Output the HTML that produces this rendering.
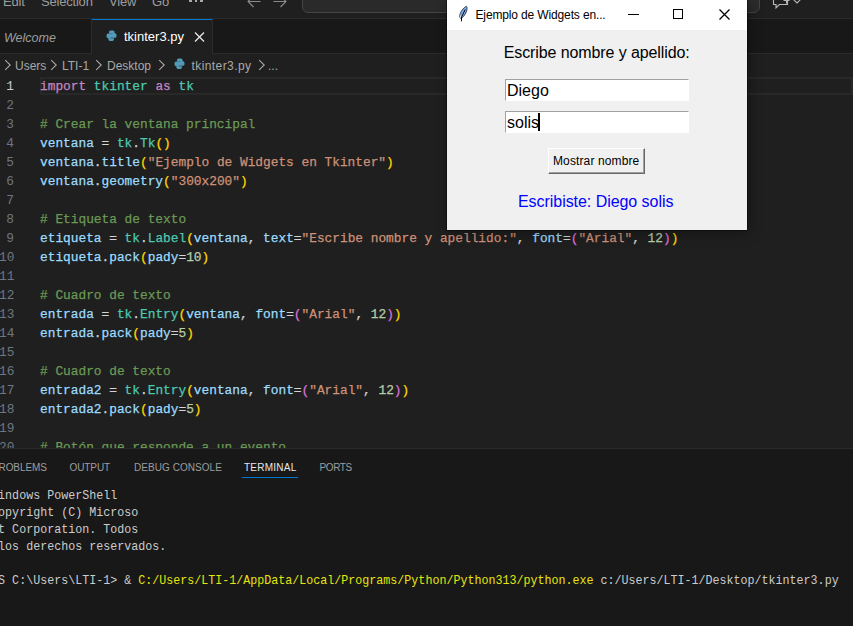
<!DOCTYPE html>
<html><head><meta charset="utf-8">
<style>
*{margin:0;padding:0;box-sizing:border-box}
html,body{width:853px;height:626px;overflow:hidden;background:#1f1f1f}
body{position:relative;font-family:"Liberation Sans",sans-serif}
.abs{position:absolute}
#titlebar{left:0;top:0;width:853px;height:19px;background:#1f1f1f;border-bottom:1px solid #2b2b2b}
.menu{position:absolute;top:-5.6px;font-size:13px;letter-spacing:-0.2px;color:#9d9d9d;white-space:nowrap;line-height:16px}
#search{left:302px;top:-10px;width:458px;height:23px;border:1px solid #454545;border-radius:6px;background:#2a2a2a}
#tabbar{left:0;top:19px;width:853px;height:35px;background:#181818;border-bottom:1px solid #2b2b2b}
#tab1{left:0;top:19px;width:92px;height:35px;background:#181818;border-right:1px solid #2b2b2b;border-bottom:1px solid #2b2b2b}
#tab2{left:92px;top:19px;width:121px;height:35px;background:#1f1f1f;border-top:1px solid #0078d4;border-right:1px solid #2b2b2b}
#editor{left:0;top:54px;width:853px;height:394px;background:#1f1f1f;overflow:hidden}
.code{position:absolute;left:40px;font-family:"Liberation Mono",monospace;font-size:12.82px;-webkit-text-stroke:0.25px currentColor;line-height:19px;white-space:pre;color:#d4d4d4}
.ln{position:absolute;width:14px;text-align:right;font-family:"Liberation Mono",monospace;font-size:12.82px;line-height:19px;color:#6e7681;white-space:pre}
.v{color:#9cdcfe}.k{color:#c586c0}.t{color:#4ec9b0}.c{color:#6a9955}.s{color:#ce9178}.n{color:#b5cea8}.b1{color:#ffd700}.b2{color:#da70d6}
#panel{left:0;top:448px;width:853px;height:178px;background:#181818;border-top:1px solid #2b2b2b}
.ptab{position:absolute;top:461px;font-size:10px;letter-spacing:-0.1px;color:#9d9d9d;line-height:14px;white-space:nowrap}
.term{position:absolute;left:-8.9px;font-family:"Liberation Mono",monospace;font-size:11.68px;transform:scaleY(1.14);transform-origin:0 11.6px;line-height:17px;white-space:pre;color:#cccccc}
/* tk window */
#tk{left:447px;top:0;width:300px;height:230px;background:#f0f0f0;box-shadow:0 0 0 1px rgba(0,0,0,.35),2px 3px 12px rgba(0,0,0,.35)}
#tktitle{left:0;top:0;width:300px;height:30px;background:#ffffff}
.tkt{position:absolute;font-size:12px;color:#000;white-space:nowrap;line-height:14px}
.ent{position:absolute;background:#fff;border-top:1px solid #a0a0a0;border-left:1px solid #a0a0a0;border-right:1px solid #fff;border-bottom:1px solid #fff}
.bc{z-index:2;font-size:12px;color:#a9a9a9;line-height:15px;white-space:nowrap}
</style></head><body>
<div id="titlebar" class="abs"></div>
<div class="menu" style="left:3px">Edit</div>
<div class="menu" style="left:41px">Selection</div>
<div class="menu" style="left:109px">View</div>
<div class="menu" style="left:152px">Go</div>
<div class="abs" style="left:189px;top:-1px;width:2.5px;height:3px;background:#a8a8a8"></div><div class="abs" style="left:194.5px;top:-1px;width:2.5px;height:3px;background:#a8a8a8"></div><div class="abs" style="left:200px;top:-1px;width:2.5px;height:3px;background:#a8a8a8"></div>
<div id="search" class="abs"></div>

<div id="tabbar" class="abs"></div>
<div id="tab1" class="abs"></div>
<div id="tab2" class="abs"></div>
<div class="abs" style="left:4px;top:30px;font-size:12.5px;font-style:italic;color:#9d9d9d;line-height:16px">Welcome</div>
<div class="abs" style="left:124px;top:29px;font-size:13px;color:#ffffff;line-height:16px">tkinter3.py</div>

<svg class="abs" style="left:4px;top:59px;z-index:2" width="8" height="12" viewBox="0 0 8 12"><path d="M1.2 1.2 L6.2 6 L1.2 10.8" fill="none" stroke="#a9a9a9" stroke-width="1.1"/></svg>
<div class="abs bc" style="left:15px;top:59px">Users</div>
<svg class="abs" style="left:50px;top:59px;z-index:2" width="8" height="12" viewBox="0 0 8 12"><path d="M1.2 1.2 L6.2 6 L1.2 10.8" fill="none" stroke="#a9a9a9" stroke-width="1.1"/></svg>
<div class="abs bc" style="left:62px;top:59px">LTI-1</div>
<svg class="abs" style="left:95px;top:59px;z-index:2" width="8" height="12" viewBox="0 0 8 12"><path d="M1.2 1.2 L6.2 6 L1.2 10.8" fill="none" stroke="#a9a9a9" stroke-width="1.1"/></svg>
<div class="abs bc" style="left:107px;top:59px">Desktop</div>
<svg class="abs" style="left:158px;top:59px;z-index:2" width="8" height="12" viewBox="0 0 8 12"><path d="M1.2 1.2 L6.2 6 L1.2 10.8" fill="none" stroke="#a9a9a9" stroke-width="1.1"/></svg>
<div class="abs bc" style="left:191.5px;top:59px;letter-spacing:0.42px">tkinter3.py</div>
<svg class="abs" style="left:257.5px;top:59px;z-index:2" width="8" height="12" viewBox="0 0 8 12"><path d="M1.2 1.2 L6.2 6 L1.2 10.8" fill="none" stroke="#a9a9a9" stroke-width="1.1"/></svg>
<div class="abs bc" style="left:268px;top:59px">...</div>
<svg class="abs" style="left:106px;top:30px;z-index:2" width="12" height="12" viewBox="0 0 12 12"><path d="M4.6 0.5 H7 A1.6 1.6 0 0 1 8.6 2.1 V5.4 A1 1 0 0 1 7.6 6.4 H4.4 A1 1 0 0 0 3.4 7.4 V8.2 H2.1 A1.6 1.6 0 0 1 0.5 6.6 V5.2 A1.6 1.6 0 0 1 2.1 3.6 H6.3 V3.2 H3 V2.1 A1.6 1.6 0 0 1 4.6 0.5 Z" fill="#519aba"/><path d="M6.4 10.9 H4 A1.6 1.6 0 0 1 2.4 9.3 V6.8 A1 1 0 0 1 3.4 5.8 H6.6 A1 1 0 0 0 7.6 4.8 V3.2 H8.9 A1.6 1.6 0 0 1 10.5 4.8 V6.2 A1.6 1.6 0 0 1 8.9 7.8 H4.7 V8.2 H8 V9.3 A1.6 1.6 0 0 1 6.4 10.9 Z" fill="#519aba"/></svg>
<svg class="abs" style="left:174px;top:58px;z-index:2" width="12" height="12" viewBox="0 0 12 12"><path d="M4.6 0.5 H7 A1.6 1.6 0 0 1 8.6 2.1 V5.4 A1 1 0 0 1 7.6 6.4 H4.4 A1 1 0 0 0 3.4 7.4 V8.2 H2.1 A1.6 1.6 0 0 1 0.5 6.6 V5.2 A1.6 1.6 0 0 1 2.1 3.6 H6.3 V3.2 H3 V2.1 A1.6 1.6 0 0 1 4.6 0.5 Z" fill="#519aba"/><path d="M6.4 10.9 H4 A1.6 1.6 0 0 1 2.4 9.3 V6.8 A1 1 0 0 1 3.4 5.8 H6.6 A1 1 0 0 0 7.6 4.8 V3.2 H8.9 A1.6 1.6 0 0 1 10.5 4.8 V6.2 A1.6 1.6 0 0 1 8.9 7.8 H4.7 V8.2 H8 V9.3 A1.6 1.6 0 0 1 6.4 10.9 Z" fill="#519aba"/></svg>
<svg class="abs" style="left:193.5px;top:32px;z-index:2" width="11" height="10" viewBox="0 0 11 10"><path d="M1 0.6 L10 9.4 M10 0.6 L1 9.4" stroke="#e4e4e4" stroke-width="1.35"/></svg>
<svg class="abs" style="left:246px;top:-6px;z-index:2" width="16" height="14" viewBox="0 0 16 14"><path d="M14.5 7.5 H2 M7.5 2 L2 7.5 L7.5 13" fill="none" stroke="#8a8a8a" stroke-width="1.1"/></svg>
<svg class="abs" style="left:272px;top:-6px;z-index:2" width="16" height="14" viewBox="0 0 16 14"><path d="M1.5 7.5 H14 M8.5 2 L14 7.5 L8.5 13" fill="none" stroke="#8a8a8a" stroke-width="1.1"/></svg>
<svg class="abs" style="left:772px;top:-10px;z-index:2" width="32" height="20" viewBox="0 0 32 20"><path d="M12 4 H1.5 V14.5 H4 V17.8 L7.3 14.5 H15.5 V10" fill="none" stroke="#b8b8b8" stroke-width="1.1"/><path d="M14.5 7.5 V13.5 M11.5 10.5 H17.5" stroke="#b8b8b8" stroke-width="1.1"/><path d="M21.5 9.5 L25 13 L28.5 9.5" fill="none" stroke="#b8b8b8" stroke-width="1.1"/></svg>
<div id="editor" class="abs">
<div class="abs" style="left:40px;top:23px;width:813px;height:18px;border:2px solid #282828"></div>
<div class="ln" style="left:0px;top:22.5px;color:#cccccc">1</div>
<div class="code" style="top:22.5px"><span class="k">import</span> <span class="t">tkinter</span> <span class="k">as</span> <span class="t">tk</span></div>
<div class="ln" style="left:0px;top:41.5px;color:#6e7681">2</div>
<div class="ln" style="left:0px;top:60.5px;color:#6e7681">3</div>
<div class="code" style="top:60.5px"><span class="c"># Crear la ventana principal</span></div>
<div class="ln" style="left:0px;top:79.5px;color:#6e7681">4</div>
<div class="code" style="top:79.5px"><span class="v">ventana</span> = <span class="t">tk</span>.<span class="t">Tk</span><span class="b1">()</span></div>
<div class="ln" style="left:0px;top:98.5px;color:#6e7681">5</div>
<div class="code" style="top:98.5px"><span class="v">ventana</span>.<span class="v">title</span><span class="b1">(</span><span class="s">"Ejemplo de Widgets en Tkinter"</span><span class="b1">)</span></div>
<div class="ln" style="left:0px;top:117.5px;color:#6e7681">6</div>
<div class="code" style="top:117.5px"><span class="v">ventana</span>.<span class="v">geometry</span><span class="b1">(</span><span class="s">"300x200"</span><span class="b1">)</span></div>
<div class="ln" style="left:0px;top:136.5px;color:#6e7681">7</div>
<div class="ln" style="left:0px;top:155.5px;color:#6e7681">8</div>
<div class="code" style="top:155.5px"><span class="c"># Etiqueta de texto</span></div>
<div class="ln" style="left:0px;top:174.5px;color:#6e7681">9</div>
<div class="code" style="top:174.5px"><span class="v">etiqueta</span> = <span class="t">tk</span>.<span class="t">Label</span><span class="b1">(</span><span class="v">ventana</span>, <span class="v">text</span>=<span class="s">"Escribe nombre y apellido:"</span>, <span class="v">font</span>=<span class="b2">(</span><span class="s">"Arial"</span>, <span class="n">12</span><span class="b2">)</span><span class="b1">)</span></div>
<div class="ln" style="left:-1px;top:193.5px;color:#6e7681">10</div>
<div class="code" style="top:193.5px"><span class="v">etiqueta</span>.<span class="v">pack</span><span class="b1">(</span><span class="v">pady</span>=<span class="n">10</span><span class="b1">)</span></div>
<div class="ln" style="left:-1px;top:212.5px;color:#6e7681">11</div>
<div class="ln" style="left:-1px;top:231.5px;color:#6e7681">12</div>
<div class="code" style="top:231.5px"><span class="c"># Cuadro de texto</span></div>
<div class="ln" style="left:-1px;top:250.5px;color:#6e7681">13</div>
<div class="code" style="top:250.5px"><span class="v">entrada</span> = <span class="t">tk</span>.<span class="t">Entry</span><span class="b1">(</span><span class="v">ventana</span>, <span class="v">font</span>=<span class="b2">(</span><span class="s">"Arial"</span>, <span class="n">12</span><span class="b2">)</span><span class="b1">)</span></div>
<div class="ln" style="left:-1px;top:269.5px;color:#6e7681">14</div>
<div class="code" style="top:269.5px"><span class="v">entrada</span>.<span class="v">pack</span><span class="b1">(</span><span class="v">pady</span>=<span class="n">5</span><span class="b1">)</span></div>
<div class="ln" style="left:-1px;top:288.5px;color:#6e7681">15</div>
<div class="ln" style="left:-1px;top:307.5px;color:#6e7681">16</div>
<div class="code" style="top:307.5px"><span class="c"># Cuadro de texto</span></div>
<div class="ln" style="left:-1px;top:326.5px;color:#6e7681">17</div>
<div class="code" style="top:326.5px"><span class="v">entrada2</span> = <span class="t">tk</span>.<span class="t">Entry</span><span class="b1">(</span><span class="v">ventana</span>, <span class="v">font</span>=<span class="b2">(</span><span class="s">"Arial"</span>, <span class="n">12</span><span class="b2">)</span><span class="b1">)</span></div>
<div class="ln" style="left:-1px;top:345.5px;color:#6e7681">18</div>
<div class="code" style="top:345.5px"><span class="v">entrada2</span>.<span class="v">pack</span><span class="b1">(</span><span class="v">pady</span>=<span class="n">5</span><span class="b1">)</span></div>
<div class="ln" style="left:-1px;top:364.5px;color:#6e7681">19</div>
<div class="ln" style="left:-1px;top:383.5px;color:#6e7681">20</div>
<div class="code" style="top:383.5px"><span class="c"># Botón que responde a un evento</span></div>
<div class="ln" style="left:-1px;top:402.5px;color:#6e7681">21</div>
<div class="code" style="top:402.5px"><span class="v">boton</span> = <span class="t">tk</span>.<span class="t">Button</span><span class="b1">(</span><span class="v">ventana</span>, <span class="v">text</span>=<span class="s">"Mostrar nombre"</span><span class="b1">)</span></div>
</div>

<div id="panel" class="abs"></div>
<div class="ptab" style="left:-8px">PROBLEMS</div>
<div class="ptab" style="left:69.5px">OUTPUT</div>
<div class="ptab" style="left:134px;letter-spacing:0.05px">DEBUG CONSOLE</div>
<div class="ptab" style="left:244px;color:#e7e7e7;letter-spacing:0.25px">TERMINAL</div>
<div class="ptab" style="left:319.6px;letter-spacing:-0.45px">PORTS</div>
<div class="abs" style="left:242px;top:477px;width:56px;height:1px;background:#0078d4"></div>

<div class="term" style="top:488px">Windows PowerShell</div>
<div class="term" style="top:505px">Copyright (C) Microso</div>
<div class="term" style="top:522px">ft Corporation. Todos</div>
<div class="term" style="top:539px"> los derechos reservados.</div>
<div class="term" style="top:573px">PS C:\Users\LTI-1&gt; &amp; <span style="color:#e5e510">C:/Users/LTI-1/AppData/Local/Programs/Python/Python313/python.exe</span> c:/Users/LTI-1/Desktop/tkinter3.py</div>

<div id="tk" class="abs">
  <div id="tktitle" class="abs"></div>
  <svg class="abs" style="left:11px;top:5px" width="11" height="18" viewBox="0 0 11 18"><path d="M8.4 1.3 C9.6 2.2 9.2 5.2 7.8 8 C6.5 10.6 4.8 12.6 2.9 13.4 C1.6 13 1.3 11.2 2.2 8.7 C3.6 5.2 5.8 2.4 8.4 1.3 Z" fill="#78b0f6" stroke="#2a2a2a" stroke-width="0.85"/><path d="M2.6 10.5 C2.4 11.5 2.5 12.3 3 12.8" fill="none" stroke="#ffffff" stroke-width="1"/><path d="M7.2 4.5 L3.6 12 L3.4 16.3" fill="none" stroke="#000" stroke-width="1"/></svg>
  <div class="abs" style="left:181px;top:14px;width:11px;height:1px;background:#000"></div>
  <div class="abs" style="left:226px;top:9px;width:10px;height:10px;border:1px solid #000"></div>
  <svg class="abs" style="left:271.5px;top:8.5px" width="11" height="11" viewBox="0 0 11 11"><path d="M0.5 0.5 L10.5 10.5 M10.5 0.5 L0.5 10.5" stroke="#000" stroke-width="1.25"/></svg>
  <div class="tkt" style="left:28.5px;top:8px;letter-spacing:-0.14px">Ejemplo de Widgets en...</div>
  <div class="abs" style="left:56.7px;top:44px;font-size:16px;letter-spacing:-0.1px;color:#000;white-space:nowrap;line-height:18px">Escribe nombre y apellido:</div>
  <div class="ent" style="left:58px;top:79px;width:184px;height:22px"></div>
  <div class="ent" style="left:58px;top:111px;width:184px;height:22px"></div>
  <div class="abs" style="left:60px;top:81px;font-size:16px;color:#000;white-space:nowrap;line-height:19px">Diego</div>
  <div class="abs" style="left:60px;top:113px;font-size:16px;color:#000;white-space:nowrap;line-height:19px">solis</div>
  <div class="abs" style="left:91px;top:113px;width:2px;height:18px;background:#000"></div>
  <div class="abs" style="left:101px;top:148px;width:97px;height:26px;background:#f0f0f0;border-top:1px solid #fff;border-left:1px solid #fff;border-right:1px solid #696969;border-bottom:1px solid #696969;box-shadow:inset -1px -1px 0 #a0a0a0"></div>
  <div class="tkt" style="left:106px;top:154px;letter-spacing:0.12px">Mostrar nombre</div>
  <div class="abs" style="left:71px;top:192px;font-size:16px;letter-spacing:-0.05px;color:#0000ff;white-space:nowrap;line-height:19px">Escribiste: Diego solis</div>
</div>
</body></html>
